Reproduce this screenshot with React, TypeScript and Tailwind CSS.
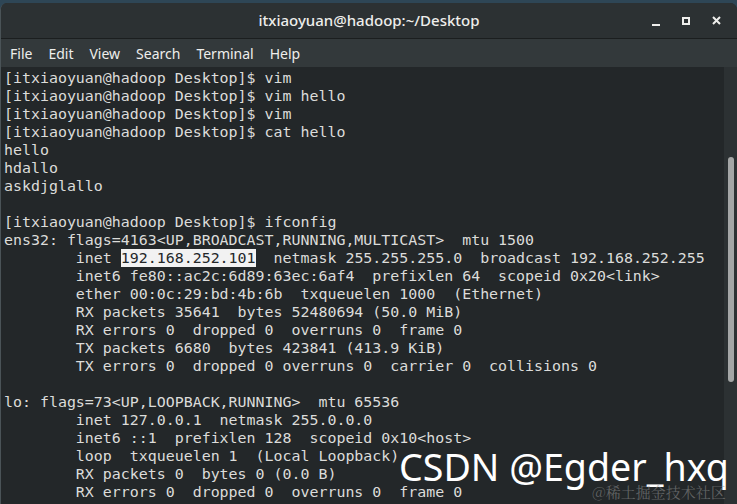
import React from "react";

const lines: (string | JSX.Element)[] = [
  "[itxiaoyuan@hadoop Desktop]$ vim",
  "[itxiaoyuan@hadoop Desktop]$ vim hello",
  "[itxiaoyuan@hadoop Desktop]$ vim",
  "[itxiaoyuan@hadoop Desktop]$ cat hello",
  "hello",
  "hdallo",
  "askdjglallo",
  "",
  "[itxiaoyuan@hadoop Desktop]$ ifconfig",
  "ens32: flags=4163<UP,BROADCAST,RUNNING,MULTICAST>  mtu 1500",
  <>
    {"        inet "}
    <span className="bg-[#f2f2f2] text-[#232729]">192.168.252.101</span>
    {"  netmask 255.255.255.0  broadcast 192.168.252.255"}
  </>,
  "        inet6 fe80::ac2c:6d89:63ec:6af4  prefixlen 64  scopeid 0x20<link>",
  "        ether 00:0c:29:bd:4b:6b  txqueuelen 1000  (Ethernet)",
  "        RX packets 35641  bytes 52480694 (50.0 MiB)",
  "        RX errors 0  dropped 0  overruns 0  frame 0",
  "        TX packets 6680  bytes 423841 (413.9 KiB)",
  "        TX errors 0  dropped 0 overruns 0  carrier 0  collisions 0",
  "",
  "lo: flags=73<UP,LOOPBACK,RUNNING>  mtu 65536",
  "        inet 127.0.0.1  netmask 255.0.0.0",
  "        inet6 ::1  prefixlen 128  scopeid 0x10<host>",
  "        loop  txqueuelen 1  (Local Loopback)",
  "        RX packets 0  bytes 0 (0.0 B)",
  "        RX errors 0  dropped 0  overruns 0  frame 0",
];

export default function App() {
  return (
    <div className="relative w-[737px] h-[504px] overflow-hidden bg-[#2e4656]">
      <div className="mt-[3px] h-[501px] flex flex-col rounded-t-[7px] overflow-hidden border-l border-[#4a5357] bg-[#232729]">
        <div className="relative h-[36px] shrink-0 flex items-center justify-center bg-[#2c3133] border-b border-[#1b1e1f]">
          <span
            className="text-[15px] text-[#eeeeec] font-medium"
            style={{ fontFamily: '"Noto Sans", "Open Sans", sans-serif' }}
          >
            itxiaoyuan@hadoop:~/Desktop
          </span>
          <div className="absolute right-0 top-0 h-full flex items-center">
            <div className="w-[30px] flex justify-center pt-[9px]">
              <div className="w-[8px] h-[2px] bg-[#eeeeec]" />
            </div>
            <div className="w-[30px] flex justify-center">
              <div className="w-[8px] h-[8px] border-2 border-[#eeeeec]" />
            </div>
            <div className="w-[30px] flex justify-center mr-[6px]">
              <svg width="9" height="9" viewBox="0 0 9 9">
                <path d="M1 1 L8 8 M8 1 L1 8" stroke="#eeeeec" strokeWidth="2" />
              </svg>
            </div>
          </div>
        </div>
        <div
          className="h-[28px] shrink-0 flex items-center gap-[16px] pl-[9px] bg-[#33393b] text-[14px] text-[#eeeeec]"
          style={{ fontFamily: '"Noto Sans", "Open Sans", sans-serif' }}
        >
          <span>File</span>
          <span>Edit</span>
          <span>View</span>
          <span>Search</span>
          <span>Terminal</span>
          <span>Help</span>
        </div>
        <div className="flex-1 flex min-h-0">
          <div
            className="flex-1 pl-[3px] pt-[2px] text-[14.93px] leading-[18px] text-[#dcdcda] whitespace-pre bg-[#232729]"
            style={{ fontFamily: '"DejaVu Sans Mono", monospace' }}
          >
            {lines.map((l, i) => (
              <div key={i} className="h-[18px]">
                {l}
              </div>
            ))}
          </div>
          <div className="w-[13px] shrink-0 bg-[#2c3133] flex justify-center">
            <div className="mt-[90px] w-[6px] h-[225px] rounded-full bg-[#a4a6a6]" />
          </div>
        </div>
      </div>
      <div
        className="absolute left-[399px] top-[448px] text-[37.6px] leading-none text-white whitespace-nowrap"
        style={{ fontFamily: '"Noto Sans", "Open Sans", sans-serif' }}
      >
        CSDN @Egder_hxq
      </div>
      <div
        className="absolute left-[592px] top-[484px] text-[15px] leading-none text-[rgba(150,150,150,0.55)] whitespace-nowrap"
        style={{ fontFamily: '"Noto Serif CJK SC", "Noto Sans CJK SC", serif' }}
      >
        @稀土掘金技术社区
      </div>
    </div>
  );
}
